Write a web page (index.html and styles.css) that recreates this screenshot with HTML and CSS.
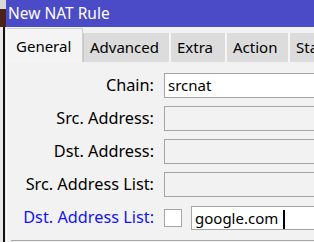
FILE: index.html
```html
<!DOCTYPE html>
<html>
<head>
<meta charset="utf-8">
<link rel="stylesheet" href="styles.css">
</head>
<body>
<div class="desk">
  <div class="edge">
    <div class="edge-top"></div>
    <div class="edge-mid"></div>
    <div class="edge-low"><div class="edge-line"></div></div>
  </div>
  <div class="window">
    <div class="titlebar">New NAT Rule</div>
    <div class="tabs">
      <div class="tab active">General</div>
      <div class="tab t-adv">Advanced</div>
      <div class="tab t-extra">Extra</div>
      <div class="tab t-action">Action</div>
      <div class="tab t-stat">Statistics</div>
    </div>
    <div class="content">
      <div class="form">
        <label class="lbl">Chain:</label>
        <div class="field white">srcnat</div>
        <label class="lbl">Src. Address:</label>
        <div class="field"></div>
        <label class="lbl">Dst. Address:</label>
        <div class="field"></div>
        <label class="lbl">Src. Address List:</label>
        <div class="field"></div>
        <label class="lbl blue">Dst. Address List:</label>
        <div class="field-row">
          <span class="check"></span>
          <div class="field white">google.com <span class="caret"></span></div>
        </div>
      </div>
      <div class="sep"></div>
    </div>
  </div>
</div>
</body>
</html>
```
FILE: styles.css
```css
html, body {
  margin: 0;
  padding: 0;
}
body {
  width: 314px;
  height: 242px;
  overflow: hidden;
  background: #f2f2f2;
  font-family: "Noto Sans", "Open Sans", sans-serif;
  font-size: 14px;
  color: #000;
}
.desk {
  display: flex;
  width: 340px;
  height: 242px;
}
.edge {
  width: 6px;
  flex: none;
  display: flex;
  flex-direction: column;
}
.edge-top {
  height: 9px;
  background: #d9d9d9;
}
.edge-mid {
  height: 18px;
  background: #4a2418;
}
.edge-low {
  flex: 1;
  background: #e8e8e8;
  display: flex;
  padding-left: 3px;
}
.edge-line {
  width: 2px;
  background: #111;
}
.window {
  flex: 1;
  display: flex;
  flex-direction: column;
  background: #f2f2f2;
  border-left: 1px solid #fbfbfb;
}
.titlebar {
  height: 27px;
  background: #4b4bc8;
  color: #fff;
  font-size: 15.5px;
  line-height: 26px;
  padding-left: 2px;
  margin-left: -1px;
}
.tabs {
  height: 35px;
  display: flex;
  align-items: flex-end;
  background: #f2f2f2;
}
.tab {
  height: 29px;
  background: #dcdcdc;
  border-left: 2px solid #f6f6f6;
  box-sizing: border-box;
  font-size: 15px;
  line-height: 28px;
  padding-left: 6px;
  color: #000;
  flex: none;
}
.tab.active {
  height: 34px;
  background: #f4f4f4;
  border: 1px solid #d0d0d0;
  border-bottom: none;
  border-left: none;
  width: 76px;
  padding-left: 9px;
  line-height: 34px;
}
.t-adv { width: 86px; border-left: 1px solid #c8c8c8; }
.t-extra { width: 56px; }
.t-action { width: 63px; }
.t-stat { width: 60px; }
.content {
  flex: 1;
  padding-top: 11px;
  display: flex;
  flex-direction: column;
}
.form {
  display: grid;
  grid-template-columns: 147px 1fr;
  column-gap: 10px;
  row-gap: 8px;
  grid-auto-rows: 25px;
  align-items: center;
}
.lbl {
  text-align: right;
  font-size: 16.3px;
  line-height: 25px;
  white-space: nowrap;
}
.lbl.blue {
  color: #1414f0;
}
.field {
  height: 25px;
  box-sizing: border-box;
  border: 1px solid #a5a5a5;
  background: #f2f2f2;
  font-size: 15px;
  line-height: 23px;
  padding-left: 3px;
}
.field.white {
  background: #fff;
}
.field-row {
  display: flex;
  align-items: center;
  gap: 9px;
}
.field-row .field {
  flex: 1;
  height: 24px;
}
.check {
  width: 18px;
  height: 18px;
  box-sizing: border-box;
  border: 1px solid #a5a5a5;
  background: #fff;
  flex: none;
}
.caret {
  display: inline-block;
  width: 2px;
  height: 19px;
  background: #000;
  vertical-align: middle;
  margin-left: 1px;
}
.sep {
  margin-top: 10px;
  margin-left: 4px;
  height: 1px;
  background: #a8a8a8;
}
```
